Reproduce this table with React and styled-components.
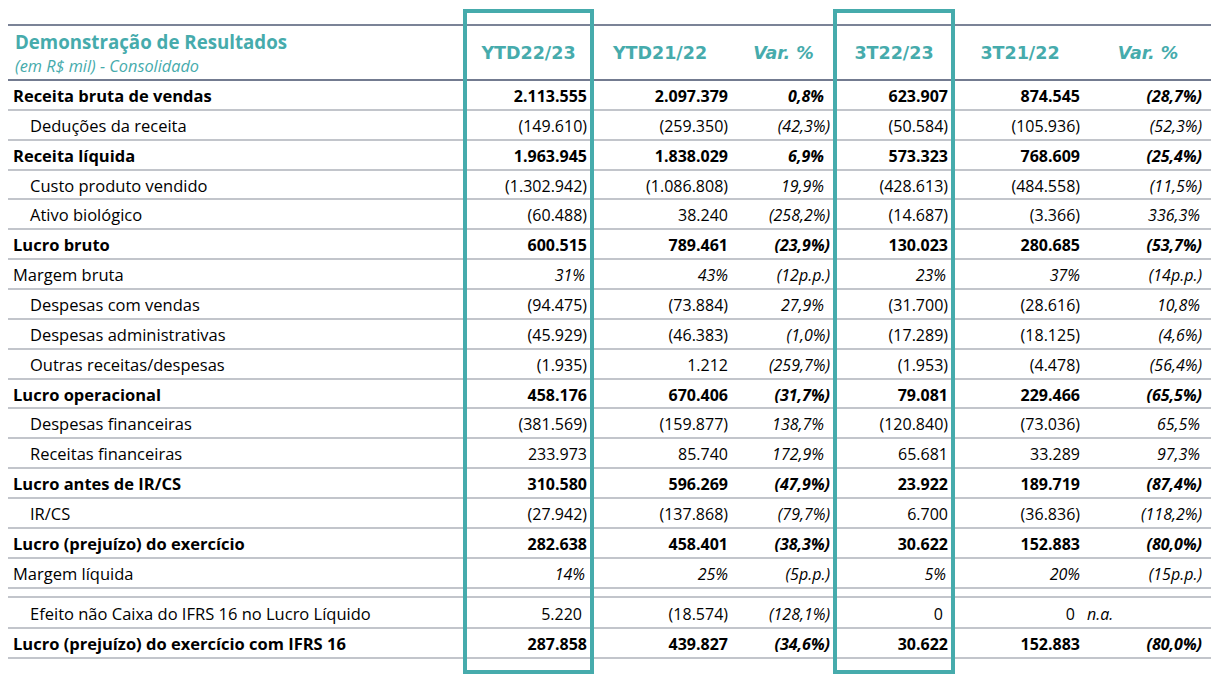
import styled, { createGlobalStyle } from "styled-components";

const teal = "#46abac";

const GlobalStyle = createGlobalStyle`
  html, body {
    margin: 0;
    padding: 0;
    background: #ffffff;
  }
  body {
    font-family: "Open Sans", "Noto Sans", sans-serif;
    color: #000000;
  }
`;

const Page = styled.div`
  position: relative;
  width: 1219px;
  height: 683px;
  padding: 24px 0 0 8px;
  box-sizing: border-box;
`;

const Table = styled.div`
  width: 1203px;
`;

const cols = "455px 131px 140px 99px 122px 130px 126px";

const HeaderRow = styled.div`
  display: grid;
  grid-template-columns: ${cols};
  height: 57px;
  box-sizing: border-box;
  border-top: 2px solid #7b8397;
  border-bottom: 2px solid #737b90;
`;

const TitleBlock = styled.div`
  display: flex;
  flex-direction: column;
  justify-content: center;
  padding: 2px 0 0 7px;
  color: ${teal};
`;

const Title = styled.div`
  font-weight: 700;
  font-size: 18.7px;
  line-height: 24px;
`;

const Subtitle = styled.div`
  font-style: italic;
  font-size: 16.3px;
  line-height: 24px;
`;

const ColHead = styled.div`
  display: flex;
  align-items: center;
  justify-content: center;
  padding-right: ${(p) => p.$shift || 0}px;
  font-family: "DejaVu Sans", Verdana, sans-serif;
  font-weight: 700;
  font-size: 17.5px;
  font-style: ${(p) => (p.$italic ? "italic" : "normal")};
  color: ${teal};
`;

const Row = styled.div`
  display: grid;
  grid-template-columns: ${cols};
  height: ${(p) => p.$h || 29.86}px;
  box-sizing: border-box;
  border-bottom: 2px solid #c2c5cb;
  font-size: 16px;
  font-weight: ${(p) => (p.$bold ? 700 : 400)};
`;

const Label = styled.div`
  display: flex;
  align-items: center;
  padding: 1px 0 0 ${(p) => (p.$indent ? 22 : 5)}px;
  font-size: 16.5px;
  white-space: nowrap;
`;

const Num = styled.div`
  display: flex;
  align-items: center;
  justify-content: ${(p) => (p.$left ? "flex-start" : "flex-end")};
  padding-top: 2px;
  padding-right: ${(p) => p.$pr}px;
  padding-left: ${(p) => (p.$left ? 2 : 0)}px;
  font-style: ${(p) => (p.$italic ? "italic" : "normal")};
  white-space: nowrap;
`;

const HighlightBox = styled.div`
  position: absolute;
  top: 9px;
  height: 665px;
  box-sizing: border-box;
  border: 4px solid ${teal};
  pointer-events: none;
`;

// right padding of each value column, matching where the figures end
const pads = [7, 6, 3, 7, 5, 9];
// italic columns (variations)
const varCols = [2, 5];

const rows = [
  { label: "Receita bruta de vendas", bold: true, v: ["2.113.555", "2.097.379", "0,8%", "623.907", "874.545", "(28,7%)"] },
  { label: "Deduções da receita", indent: true, v: ["(149.610)", "(259.350)", "(42,3%)", "(50.584)", "(105.936)", "(52,3%)"] },
  { label: "Receita líquida", bold: true, v: ["1.963.945", "1.838.029", "6,9%", "573.323", "768.609", "(25,4%)"] },
  { label: "Custo produto vendido", indent: true, v: ["(1.302.942)", "(1.086.808)", "19,9%", "(428.613)", "(484.558)", "(11,5%)"] },
  { label: "Ativo biológico", indent: true, v: ["(60.488)", "38.240", "(258,2%)", "(14.687)", "(3.366)", "336,3%"] },
  { label: "Lucro bruto", bold: true, v: ["600.515", "789.461", "(23,9%)", "130.023", "280.685", "(53,7%)"] },
  { label: "Margem bruta", margin: true, v: ["31%", "43%", "(12p.p.)", "23%", "37%", "(14p.p.)"] },
  { label: "Despesas com vendas", indent: true, v: ["(94.475)", "(73.884)", "27,9%", "(31.700)", "(28.616)", "10,8%"] },
  { label: "Despesas administrativas", indent: true, v: ["(45.929)", "(46.383)", "(1,0%)", "(17.289)", "(18.125)", "(4,6%)"] },
  { label: "Outras receitas/despesas", indent: true, v: ["(1.935)", "1.212", "(259,7%)", "(1.953)", "(4.478)", "(56,4%)"] },
  { label: "Lucro operacional", bold: true, v: ["458.176", "670.406", "(31,7%)", "79.081", "229.466", "(65,5%)"] },
  { label: "Despesas financeiras", indent: true, v: ["(381.569)", "(159.877)", "138,7%", "(120.840)", "(73.036)", "65,5%"] },
  { label: "Receitas financeiras", indent: true, v: ["233.973", "85.740", "172,9%", "65.681", "33.289", "97,3%"] },
  { label: "Lucro antes de IR/CS", bold: true, v: ["310.580", "596.269", "(47,9%)", "23.922", "189.719", "(87,4%)"] },
  { label: "IR/CS", indent: true, v: ["(27.942)", "(137.868)", "(79,7%)", "6.700", "(36.836)", "(118,2%)"] },
  { label: "Lucro (prejuízo) do exercício", bold: true, v: ["282.638", "458.401", "(38,3%)", "30.622", "152.883", "(80,0%)"] },
  { label: "Margem líquida", margin: true, v: ["14%", "25%", "(5p.p.)", "5%", "20%", "(15p.p.)"] },
];

function padFor(i, value, row) {
  let p = pads[i];
  if (row.margin && (i === 0 || i === 3)) p += 2;
  if (i === 2 && !value.startsWith("(")) p += 6;
  if (i === 5 && !value.startsWith("(")) p += 2;
  return p;
}

function DataRow({ row, h }) {
  return (
    <Row $bold={row.bold} $h={h}>
      <Label $indent={row.indent}>{row.label}</Label>
      {row.v.map((value, i) => (
        <Num
          key={i}
          $pr={padFor(i, value, row)}
          $italic={row.margin || varCols.includes(i)}
        >
          {value}
        </Num>
      ))}
    </Row>
  );
}

export default function App() {
  return (
    <>
      <GlobalStyle />
      <Page>
        <Table>
          <HeaderRow>
            <TitleBlock>
              <Title>Demonstração de Resultados</Title>
              <Subtitle>(em R$ mil) - Consolidado</Subtitle>
            </TitleBlock>
            <ColHead>YTD22/23</ColHead>
            <ColHead $shift={8}>YTD21/22</ColHead>
            <ColHead $italic>Var. %</ColHead>
            <ColHead>3T22/23</ColHead>
            <ColHead>3T21/22</ColHead>
            <ColHead $italic>Var. %</ColHead>
          </HeaderRow>

          {rows.map((row) => (
            <DataRow key={row.label} row={row} />
          ))}

          <Row $h={9.4} />

          <Row $h={31.3}>
            <Label $indent>Efeito não Caixa do IFRS 16 no Lucro Líquido</Label>
            <Num $pr={12}>5.220</Num>
            <Num $pr={6}>(18.574)</Num>
            <Num $pr={3} $italic>(128,1%)</Num>
            <Num $pr={12}>0</Num>
            <Num $pr={10}>0</Num>
            <Num $left $italic>n.a.</Num>
          </Row>

          <DataRow
            h={30}
            row={{
              label: "Lucro (prejuízo) do exercício com IFRS 16",
              bold: true,
              v: ["287.858", "439.827", "(34,6%)", "30.622", "152.883", "(80,0%)"],
            }}
          />
        </Table>

        <HighlightBox style={{ left: 463, width: 131 }} />
        <HighlightBox style={{ left: 833, width: 122 }} />
      </Page>
    </>
  );
}
